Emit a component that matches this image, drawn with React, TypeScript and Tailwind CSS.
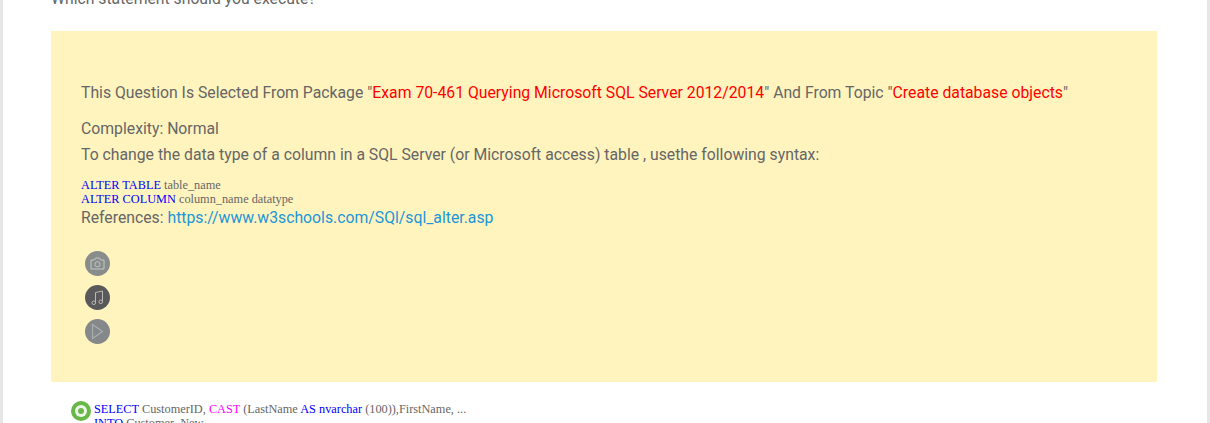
const CameraIcon = () => (
  <svg width="15" height="13" viewBox="0 0 15 13" fill="none" stroke="#c2c6c4" strokeWidth="1">
    <path d="M1 3h3.5l1-2h4l1 2H14v9H1z" />
    <circle cx="7.5" cy="7.3" r="2.6" />
  </svg>
);
const MusicIcon = () => (
  <svg width="13" height="16" viewBox="0 0 13 16" fill="none" stroke="#b8b8b6" strokeWidth="1">
    <path d="M4.5 12.5V2.5L11.5 1v10.5" />
    <circle cx="2.8" cy="12.8" r="1.8" />
    <circle cx="9.8" cy="11.8" r="1.8" />
  </svg>
);
const PlayIcon = () => (
  <svg width="13" height="17" viewBox="0 0 13 17" fill="none" stroke="#a9adab" strokeWidth="1.2">
    <path d="M1.5 1.5v14l10-7z" />
  </svg>
);

export default function App() {
  return (
    <div className="h-[423px] w-[1210px] overflow-hidden bg-[#e6e6e6] px-[3px] font-['Roboto',sans-serif] text-[#666666]">
      <div className="h-full overflow-hidden bg-white pl-[48px] pr-[50px]">
        <p className="-mt-[10px] h-[41px] text-[15.75px] leading-[18px]">Which statement should you execute?</p>
        <div className="h-[351px] bg-[#fff4be] pl-[30px] pt-[52px] text-[15.78px]">
          <p className="h-[20px] leading-[20px]">
            This Question Is Selected From Package "<span className="text-[#ff0000]">Exam 70-461 Querying Microsoft SQL Server 2012/2014</span>" And From Topic "<span className="text-[#ff0000]">Create database objects</span>"
          </p>
          <p className="mt-[16px] h-[20px] leading-[20px]">Complexity: Normal</p>
          <p className="mt-[6px] h-[20px] leading-[20px]">To change the data type of a column in a SQL Server (or Microsoft access) table , usethe following syntax:</p>
          <div className="mt-[13px] font-['Liberation_Serif',serif] text-[12.3px] leading-[14px]">
            <div><span className="text-[#0000ff]">ALTER TABLE</span> table_name</div>
            <div><span className="text-[#0000ff]">ALTER COLUMN</span> column_name datatype</div>
          </div>
          <p className="mt-[2px] h-[20px] leading-[20px]">
            References: <a className="text-[#2196d9]">https://www.w3schools.com/SQl/sql_alter.asp</a>
          </p>
          <div className="ml-[4px] mt-[23px] flex flex-col gap-[9px]">
            <div className="flex h-[25px] w-[25px] items-center justify-center rounded-full bg-[#888c8a]"><CameraIcon /></div>
            <div className="flex h-[25px] w-[25px] items-center justify-center rounded-full bg-[#59595b]"><MusicIcon /></div>
            <div className="flex h-[25px] w-[25px] items-center justify-center rounded-full bg-[#85888a]"><PlayIcon /></div>
          </div>
        </div>
        <div className="ml-[20px] mt-[20px] flex gap-[3px] font-['Liberation_Serif',serif] text-[12.3px] leading-[14px]">
          <div className="-mt-[1px] flex h-[20px] w-[20px] shrink-0 items-center justify-center rounded-full bg-[#68b848]">
            <div className="flex h-[12px] w-[12px] items-center justify-center rounded-full bg-[#eef6ea]">
              <div className="h-[6px] w-[6px] rounded-full bg-[#68b848]" />
            </div>
          </div>
          <div>
            <div><span className="text-[#0000ff]">SELECT</span> CustomerID, <span className="text-[#ff00ff]">CAST</span> (LastName <span className="text-[#0000ff]">AS</span> <span className="text-[#0000ff]">nvarchar</span> (100)),FirstName, ...</div>
            <div><span className="text-[#0000ff]">INTO</span> Customer_New</div>
          </div>
        </div>
      </div>
    </div>
  );
}
